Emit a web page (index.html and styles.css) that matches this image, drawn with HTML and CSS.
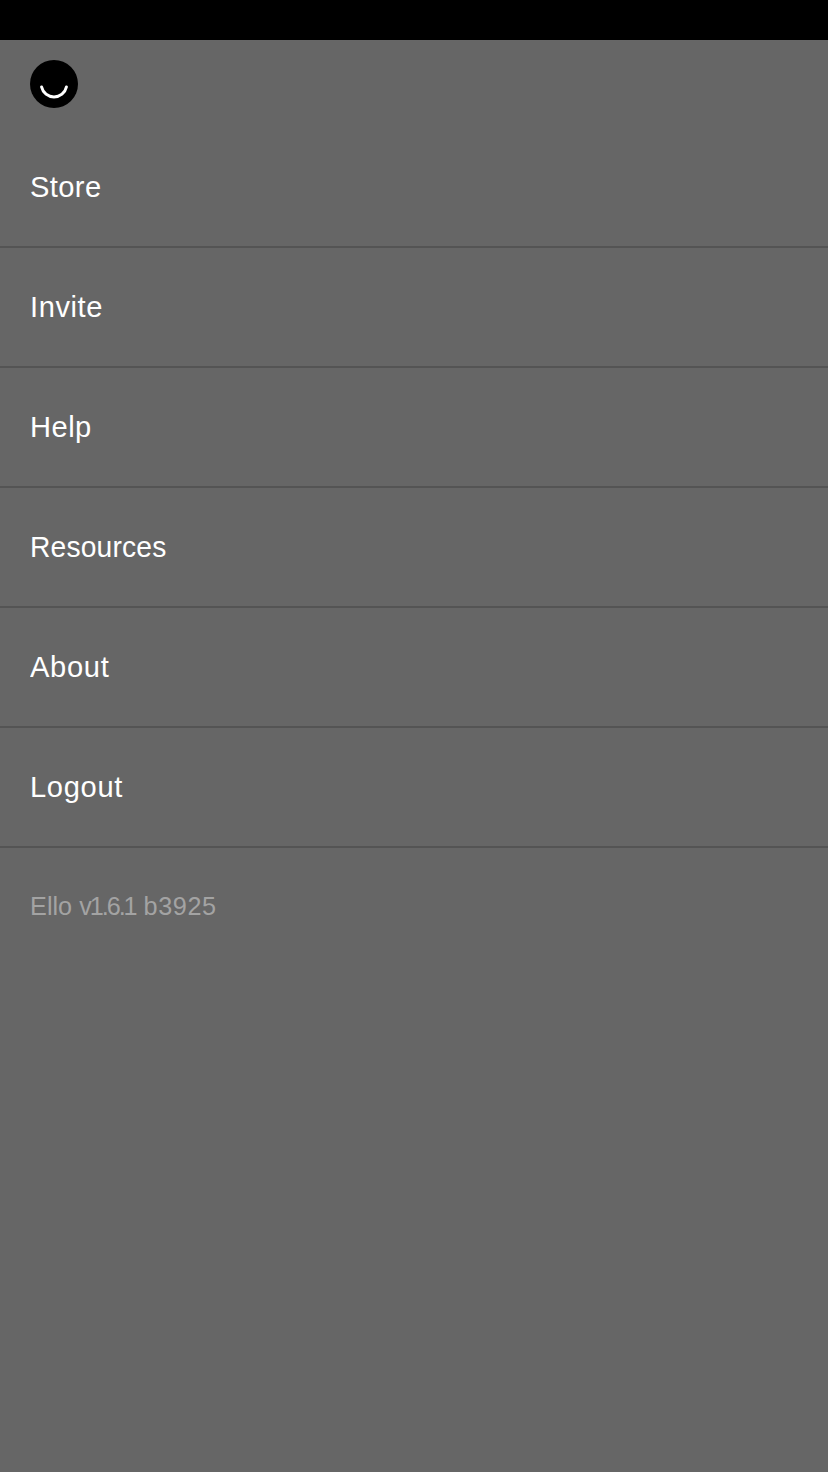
FILE: index.html
```html
<!DOCTYPE html>
<html lang="en">
<head>
<meta charset="utf-8">
<title>Ello</title>
<link rel="stylesheet" href="styles.css">
</head>
<body>
<div class="status-bar"></div>
<header class="header">
<svg class="logo" viewBox="0 0 48 48" aria-label="Ello"><circle cx="24" cy="24" r="24" fill="#000"/><path d="M11.6 27a12.7 12.7 0 0 0 24.8 0" fill="none" stroke="#fff" stroke-width="3" stroke-linecap="round"/></svg>
</header>
<nav class="menu">
<a class="item"><span class="label store">Store</span></a>
<a class="item"><span class="label invite">Invite</span></a>
<a class="item"><span class="label help">Help</span></a>
<a class="item"><span class="label resources">Resources</span></a>
<a class="item"><span class="label about">About</span></a>
<a class="item"><span class="label logout">Logout</span></a>
</nav>
<footer class="version">Ello <span class="number">v1.6.1</span> <span class="build">b3925</span></footer>
</body>
</html>
```
FILE: styles.css
```css
* { box-sizing: border-box; }
body { margin: 0; min-height: 1472px; background: #666; color: #fff; font-family: "Liberation Sans", Arial, sans-serif; }
.status-bar { height: 40px; background: #000; }
.header { height: 88px; padding: 20px 30px; }
.logo { display: block; width: 48px; height: 48px; }
.item { display: flex; align-items: center; height: 120px; padding: 0 30px; border-bottom: 2px solid #545454; font-size: 30px; line-height: 36px; }
.label { transform: scaleX(0.97); transform-origin: left; }
.store { letter-spacing: 0.4px; }
.invite { letter-spacing: 0.6px; }
.help { letter-spacing: 0.5px; }
.resources { letter-spacing: 0.2px; transform: scaleX(0.94); }
.about { letter-spacing: 0.7px; }
.logout { letter-spacing: 0.7px; }
.version { padding: 42px 31px; font-size: 26px; line-height: 32px; color: #a3a3a3; transform: scaleX(0.97); transform-origin: left; }
.number { letter-spacing: -2.1px; }
.build { margin-left: 1px; letter-spacing: 0.6px; }
```
